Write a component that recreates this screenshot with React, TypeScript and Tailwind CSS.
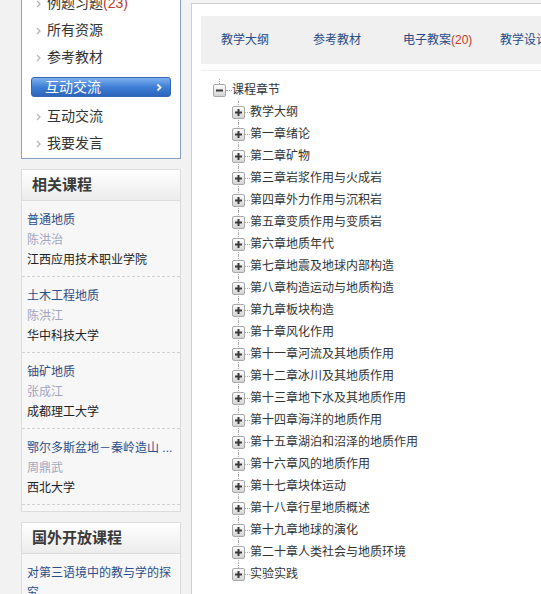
import React from "react";

const navItems = ["所有资源", "参考教材"];
const navItemsAfter = ["互动交流", "我要发言"];

const related = [
  { title: "普通地质", teacher: "陈洪治", school: "江西应用技术职业学院" },
  { title: "土木工程地质", teacher: "陈洪江", school: "华中科技大学" },
  { title: "铀矿地质", teacher: "张成江", school: "成都理工大学" },
  { title: "鄂尔多斯盆地－秦岭造山 ...", teacher: "周鼎武", school: "西北大学" },
];

const chapters = [
  "教学大纲",
  "第一章绪论",
  "第二章矿物",
  "第三章岩浆作用与火成岩",
  "第四章外力作用与沉积岩",
  "第五章变质作用与变质岩",
  "第六章地质年代",
  "第七章地震及地球内部构造",
  "第八章构造运动与地质构造",
  "第九章板块构造",
  "第十章风化作用",
  "第十一章河流及其地质作用",
  "第十二章冰川及其地质作用",
  "第十三章地下水及其地质作用",
  "第十四章海洋的地质作用",
  "第十五章湖泊和沼泽的地质作用",
  "第十六章风的地质作用",
  "第十七章块体运动",
  "第十八章行星地质概述",
  "第十九章地球的演化",
  "第二十章人类社会与地质环境",
  "实验实践",
];

function Arrow() {
  return (
    <svg width="5" height="8" viewBox="0 0 5 8" className="mr-[6px]">
      <path d="M1 1l3 3-3 3" fill="none" stroke="#b5b5b5" strokeWidth="1.3" />
    </svg>
  );
}

function NavRow({ children }: { children: React.ReactNode }) {
  return (
    <div className="h-[27px] flex items-center pl-[14px] text-[14px] text-[#333]">
      <Arrow />
      <span>{children}</span>
    </div>
  );
}

// tree +/- box
function TreeIcon({ open }: { open?: boolean }) {
  return (
    <span className="relative z-10 w-[13px] h-[13px] shrink-0 border border-[#a8a8a8] rounded-[2px] bg-gradient-to-b from-white to-[#d4d4d4] flex items-center justify-center">
      <svg width="11" height="11" viewBox="0 0 11 11">
        <rect x="2" y="4.5" width="7" height="2" fill="#3a3a3a" />
        {!open && <rect x="4.5" y="2" width="2" height="7" fill="#3a3a3a" />}
      </svg>
    </span>
  );
}

function BoxHeader({ children }: { children: React.ReactNode }) {
  return (
    <div className="h-[31px] flex items-center pl-[10px] border-b border-[#dcdcdc] bg-gradient-to-b from-white to-[#ececec] text-[15px] font-bold text-[#3a3a3a]">
      {children}
    </div>
  );
}

export default function App() {
  return (
    <div className="w-[541px] h-[594px] overflow-hidden bg-[#f2f2f2] flex font-['Liberation_Sans','Noto_Sans_CJK_SC',sans-serif]">
      {/* Left column */}
      <aside className="w-[191px] shrink-0 pl-[21px]">
        {/* Course menu */}
        <div className="w-[160px] -mt-[11px] border border-[#8aa2c4] bg-white pb-[1px]">
          <NavRow>
            例题习题<span className="text-[#c0392b]">(23)</span>
          </NavRow>
          {navItems.map((t) => (
            <NavRow key={t}>{t}</NavRow>
          ))}
          <div className="py-[6px] px-[9px]">
            <div className="h-[20px] flex items-center justify-between pl-[13px] pr-[8px] rounded-[3px] border border-[#3567b3] bg-gradient-to-b from-[#7eb0ee] via-[#3f7fd6] to-[#2c64bb] text-white text-[14px]">
              <span>互动交流</span>
              <svg width="6" height="9" viewBox="0 0 6 9">
                <path d="M1.5 1.5l3 3-3 3" fill="none" stroke="#fff" strokeWidth="1.8" />
              </svg>
            </div>
          </div>
          {navItemsAfter.map((t) => (
            <NavRow key={t}>{t}</NavRow>
          ))}
        </div>

        {/* Related courses */}
        <div className="w-[160px] mt-[10px] border border-[#dcdcdc] bg-[#f7f7f7] pb-[6px]">
          <BoxHeader>相关课程</BoxHeader>
          {related.map((c) => (
            <div
              key={c.title}
              className="pl-[5px] pr-[4px] pt-[9px] pb-[6px] border-b border-dashed border-[#d2d2d2] text-[12px] leading-[20px] whitespace-nowrap overflow-hidden"
            >
              <div className="text-[#2c4e8a]">{c.title}</div>
              <div className="text-[#a2a5c0]">{c.teacher}</div>
              <div className="text-[#222]">{c.school}</div>
            </div>
          ))}
        </div>

        {/* Foreign open courses */}
        <div className="w-[160px] mt-[10px] border border-[#dcdcdc] bg-[#f7f7f7]">
          <BoxHeader>国外开放课程</BoxHeader>
          <div className="pl-[5px] pr-[5px] pt-[9px] text-[12px] leading-[20px] text-[#2c4e8a]">
            对第三语境中的教与学的探究
          </div>
        </div>
      </aside>

      {/* Main content */}
      <main className="flex-1 min-w-0 mt-[3px] bg-white border-t border-l border-[#d0d0d0] pl-[9px] pt-[12px]">
        <div className="pb-[6px] border-b border-[#ededed]">
          <div className="h-[48px] bg-[#f0f0f0] flex items-center pl-[20px] text-[12px] text-[#274a86] whitespace-nowrap">
            <span className="w-[92px] shrink-0">教学大纲</span>
            <span className="w-[90px] shrink-0">参考教材</span>
            <span className="w-[97px] shrink-0">
              电子教案<span className="text-[#c0392b]">(20)</span>
            </span>
            <span className="shrink-0">教学设计</span>
          </div>
        </div>

        {/* Chapter tree */}
        <div className="pt-[8px] pl-[12px] text-[12px] text-[#333]">
          <div className="h-[22px] flex items-center">
            <span className="relative w-[13px] h-[22px] flex items-center justify-center">
              <span className="absolute left-[6px] top-0 h-[5px] border-l border-dotted border-[#aaa]" />
              <TreeIcon open />
            </span>
            <span className="w-[6px] border-t border-dotted border-[#aaa]" />
            <span>课程章节</span>
          </div>
          <div className="pl-[19px]">
            {chapters.map((c, i) => (
              <div key={c} className="h-[22px] flex items-center">
                <span className="relative w-[13px] h-[22px] flex items-center justify-center">
                  <span
                    className={
                      i === chapters.length - 1
                        ? "absolute left-[6px] top-0 h-[11px] border-l border-dotted border-[#aaa]"
                        : "absolute left-[6px] top-0 bottom-0 border-l border-dotted border-[#aaa]"
                    }
                  />
                  <TreeIcon />
                </span>
                <span className="w-[5px] border-t border-dotted border-[#aaa]" />
                <span>{c}</span>
              </div>
            ))}
          </div>
        </div>
      </main>
    </div>
  );
}
